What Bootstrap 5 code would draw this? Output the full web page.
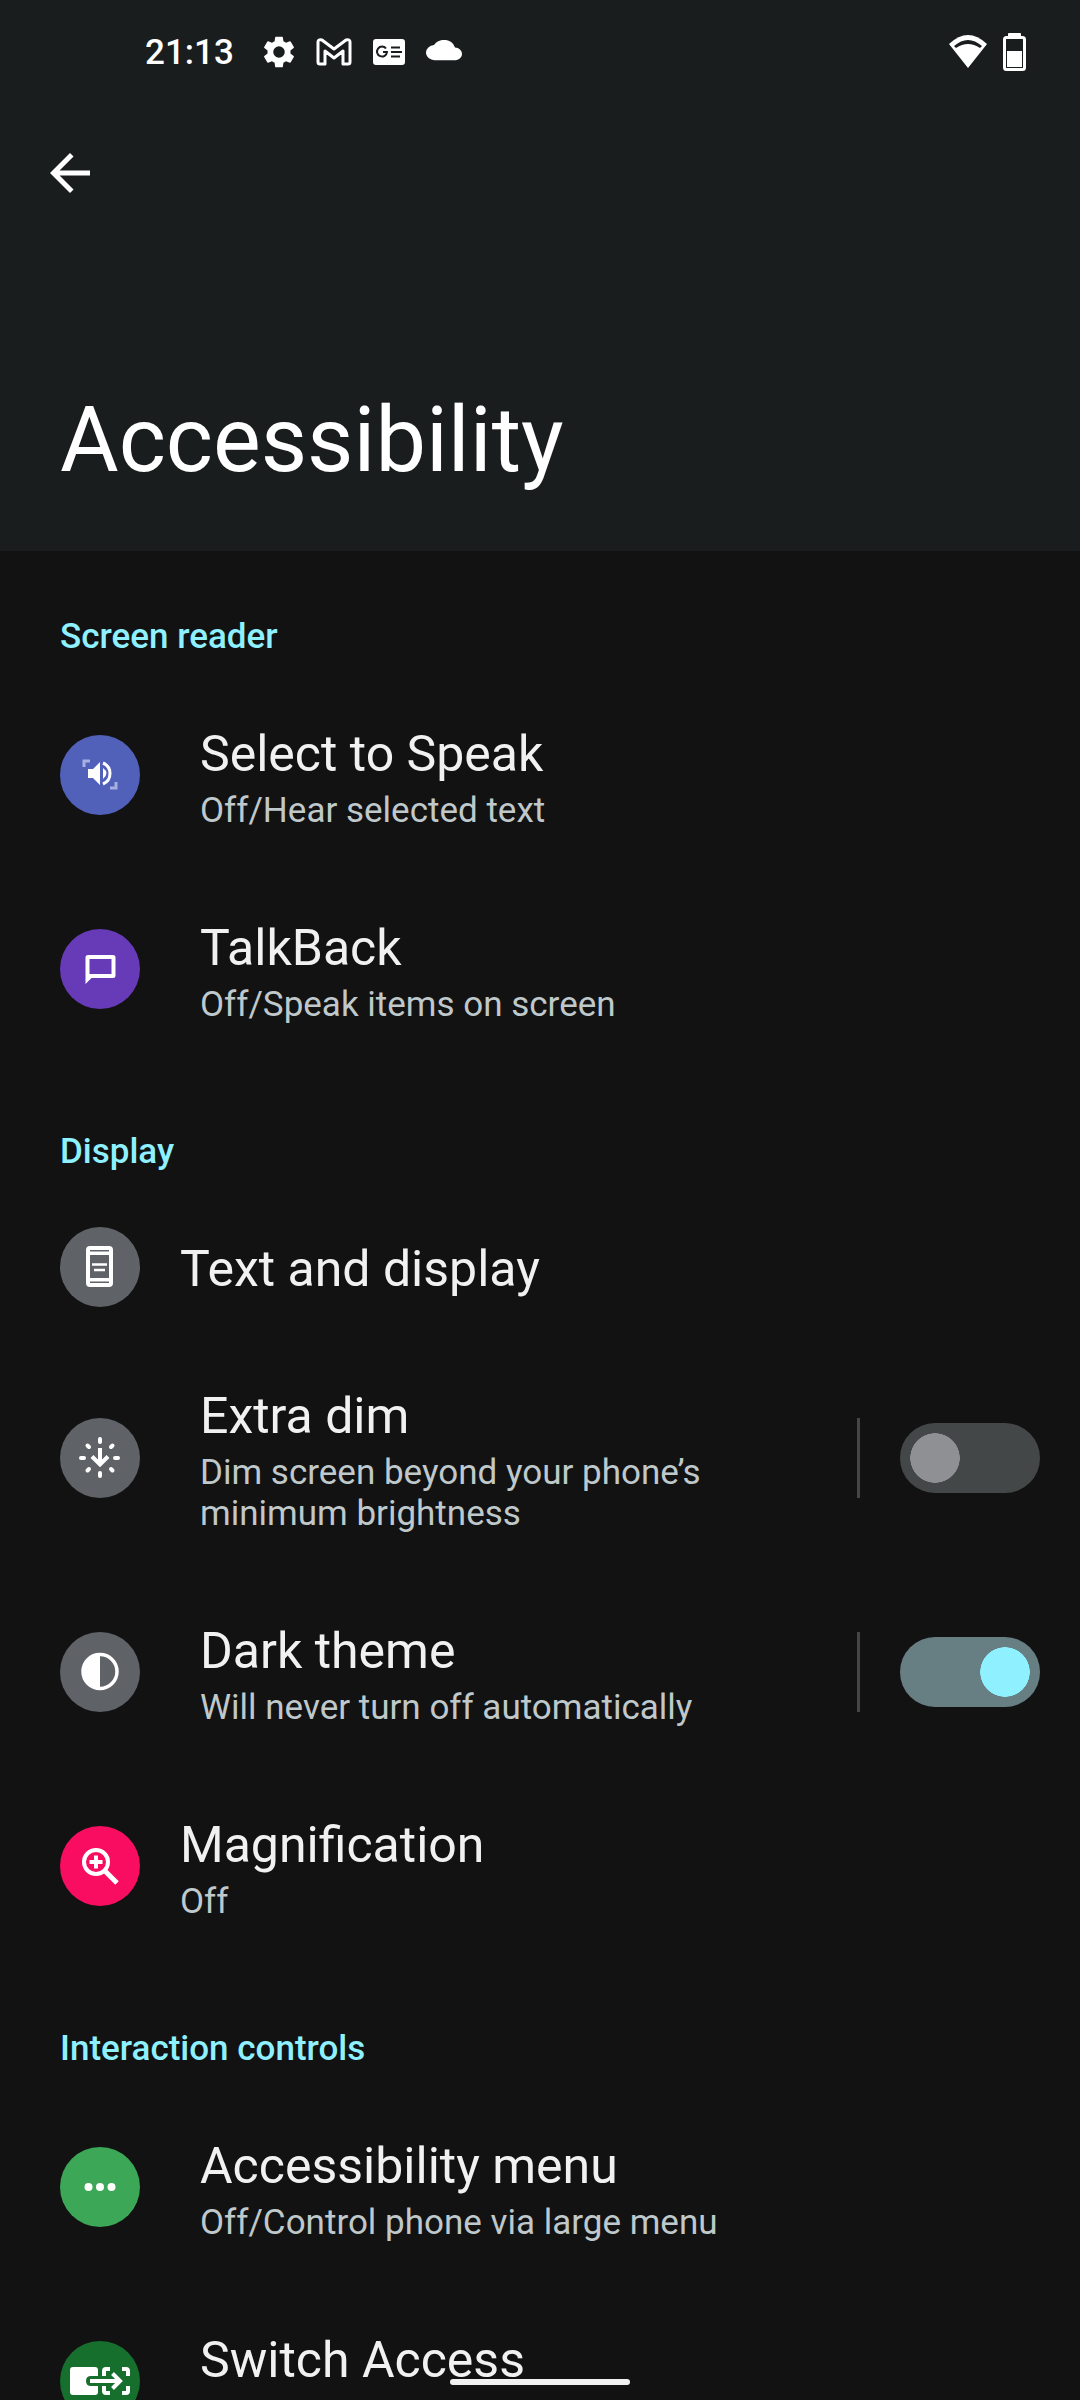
<!DOCTYPE html>
<html lang="en">
<head>
<meta charset="utf-8">
<meta name="viewport" content="width=device-width, initial-scale=1">
<title>Accessibility</title>
<link href="https://cdn.jsdelivr.net/npm/bootstrap@5.3.0/dist/css/bootstrap.min.css" rel="stylesheet">
<style>
  body { font-family: Roboto, "Noto Sans", sans-serif; background: #121212; color: #f1f1f1; }
  .app-head { background: #1a1d1e; color: #fff; padding-bottom: 58px; }
  .status-bar { height: 104px; padding: 0 54px 0 145px; }
  .clock { font-size: 35px; line-height: 41px; font-weight: 500; margin-right: 29px; }
  .status-icons { gap: 21px; }
  .back-btn { width: 60px; height: 60px; margin: 39px 0 185px 40px; color: #fff; }
  .page-title { font-size: 90px; line-height: 105px; font-weight: 400; padding: 0 60px; }
  .settings-list { scrollbar-width: none; }
  .group-title { font-size: 35px; line-height: 41px; font-weight: 500; color: #8ff0ff; padding: 65px 60px 21px; }
  .setting { padding: 0 40px 0 60px; }
  .setting-link { color: inherit; }
  .setting-link:hover { color: inherit; }
  .setting-icon { width: 80px; height: 80px; }
  .setting-text { padding: 46px 0 41px; margin-left: 60px; }
  .setting-text.near { margin-left: 40px; }
  .setting-text.tall { min-height: 194px; }
  .setting-name { font-size: 50px; line-height: 60px; }
  .setting-note { font-size: 35px; line-height: 41px; color: #bfc8ca; margin-top: 6px; }
  .rule { width: 3px; height: 80px; background: #444748; margin: 0 40px 0 60px; }
  .form-switch .toggle { width: 140px; height: 70px; margin: 0; border: 0; border-radius: 35px;
    background: #444748 radial-gradient(circle closest-side, #8e9093 98%, transparent) 10px 10px / 50px 50px no-repeat; }
  .form-switch .toggle:checked { background-color: #677e83;
    background-image: radial-gradient(circle closest-side, #8ff0ff 98%, transparent); background-position: 80px 10px; }
  .gesture-bar { width: 180px; height: 6px; bottom: 15px; background: #f1f1f1; }
</style>
</head>
<body>
<div class="vh-100 d-flex flex-column overflow-hidden">
  <header class="app-head flex-shrink-0">
    <div class="status-bar d-flex align-items-center justify-content-between">
      <div class="d-flex align-items-center">
        <span class="clock">21:13</span>
        <div class="status-icons d-flex align-items-center">
          <svg width="32" height="34" viewBox="2 2 20 20" fill="#fff" aria-hidden="true"><path d="M19.14 12.94c.04-.3.06-.61.06-.94 0-.32-.02-.64-.07-.94l2.03-1.58a.49.49 0 0 0 .12-.61l-1.92-3.32a.49.49 0 0 0-.59-.22l-2.39.96a7 7 0 0 0-1.62-.94l-.36-2.54a.48.48 0 0 0-.48-.41h-3.84a.47.47 0 0 0-.47.41l-.36 2.54c-.59.24-1.13.57-1.62.94l-2.39-.96a.48.48 0 0 0-.59.22L2.74 8.87c-.12.21-.08.47.12.61l2.03 1.58c-.05.3-.09.63-.09.94s.02.64.07.94l-2.03 1.58a.49.49 0 0 0-.12.61l1.92 3.32c.12.22.37.29.59.22l2.39-.96c.5.38 1.03.7 1.62.94l.36 2.54c.05.24.24.41.48.41h3.84c.24 0 .44-.17.47-.41l.36-2.54c.59-.24 1.13-.56 1.62-.94l2.39.96c.22.08.47 0 .59-.22l1.92-3.32a.47.47 0 0 0-.12-.61zM12 15.6a3.6 3.6 0 1 1 0-7.2 3.6 3.6 0 0 1 0 7.2z"/></svg>
          <svg width="36" height="28" viewBox="0 0 36 28" fill="none" stroke="#fff" stroke-width="3" stroke-linejoin="round" aria-hidden="true"><path d="M2 4v20q0 2 2 2h5V13l9 7 9-7v13h5q2 0 2-2V4q0-3-4-2L18 11 6 2Q2 1 2 4z"/></svg>
          <svg width="32" height="28" viewBox="0 0 32 28" aria-hidden="true"><rect y="1" width="32" height="26" rx="3" fill="#fff"/><path d="M13 10.500A5 5 0 1 0 14 14H10M18 9.500h9M18 14h11M18 18.500h9" fill="none" stroke="#1a1d1e" stroke-width="2"/></svg>
          <svg width="36" height="24" viewBox="0 4 24 16" fill="#fff" aria-hidden="true"><path d="M19.350 10.040A7.490 7.490 0 0 0 12 4C9.110 4 6.600 5.640 5.350 8.040A5.990 5.990 0 0 0 0 14c0 3.310 2.690 6 6 6h13c2.760 0 5-2.240 5-5 0-2.640-2.050-4.780-4.650-4.960z" transform="translate(0 .5) scale(1 .85)"/></svg>
        </div>
      </div>
      <div class="d-flex align-items-center gap-3">
        <svg width="38" height="34" viewBox="0 0 38 34" aria-hidden="true"><path d="M0 9Q19-9 38 9L19 33z" fill="#fff"/><path d="M5 11Q19-1 33 11L31 13Q19 5 7 13z" fill="#1a1d1e"/></svg>
        <svg width="23" height="38" viewBox="0 0 23 38" aria-hidden="true"><rect x="5" width="13" height="4" rx="1" fill="#fff"/><rect x="1.500" y="4.500" width="20" height="32" rx="2" fill="none" stroke="#fff" stroke-width="3"/><path d="M4 18h15v16H4z" fill="#fff"/></svg>
      </div>
    </div>
    <button type="button" class="back-btn btn p-0 border-0 d-block" aria-label="Back">
      <svg class="d-block" width="60" height="60" viewBox="0 0 24 24" fill="currentColor" aria-hidden="true"><path d="M20 11H7.830l5.590-5.590L12 4l-8 8 8 8 1.410-1.410L7.830 13H20v-2z"/></svg>
    </button>
    <h1 class="page-title m-0">Accessibility</h1>
  </header>

  <main class="settings-list flex-grow-1 overflow-auto">
    <section>
      <h2 class="group-title m-0">Screen reader</h2>
      <a href="#" class="setting setting-link d-flex align-items-center text-decoration-none">
        <svg class="setting-icon flex-shrink-0" viewBox="0 0 80 80" aria-hidden="true"><circle cx="40" cy="40" r="40" fill="#5160b9"/><path d="M24 32v-6h6M50 53h6v-6" fill="none" stroke="#a8b0e2" stroke-width="3"/><path d="M28 34h5l7-7v23l-7-7h-5zM43 33q7 5 0 11z" fill="#fff"/><path d="M43 28q7 3 7 10.500T43 49" fill="none" stroke="#fff" stroke-width="3"/></svg>
        <div class="setting-text"><div class="setting-name">Select to Speak</div><div class="setting-note">Off/Hear selected text</div></div>
      </a>
      <a href="#" class="setting setting-link d-flex align-items-center text-decoration-none">
        <svg class="setting-icon flex-shrink-0" viewBox="0 0 80 80" aria-hidden="true"><circle cx="40" cy="40" r="40" fill="#673ab7"/><path fill="#fff" fill-rule="evenodd" d="M28 26h25q2.500 0 2.500 2.500v18q0 2.500-2.500 2.500H31.500L25.500 55V28.500Q25.500 26 28 26zM29.500 30v15h22V30z"/></svg>
        <div class="setting-text"><div class="setting-name">TalkBack</div><div class="setting-note">Off/Speak items on screen</div></div>
      </a>
    </section>

    <section>
      <h2 class="group-title m-0">Display</h2>
      <a href="#" class="setting setting-link d-flex align-items-center text-decoration-none">
        <svg class="setting-icon flex-shrink-0" viewBox="0 0 80 80" aria-hidden="true"><circle cx="40" cy="40" r="40" fill="#5f6368"/><rect x="26" y="19" width="27" height="41" rx="4" fill="#fff"/><path d="M30 23h19v1.500H30zM30 28h19v23H30zM30 54.500h19V56H30z" fill="#5f6368"/><path d="M32 37.500h15M34 43h11" stroke="#fff" stroke-width="2.500"/></svg>
        <div class="setting-text near"><div class="setting-name">Text and display</div></div>
      </a>
      <div class="setting d-flex align-items-center">
        <svg class="setting-icon flex-shrink-0" viewBox="0 0 80 80" aria-hidden="true"><circle cx="40" cy="40" r="40" fill="#5f6368"/><g fill="none" stroke="#fff" stroke-width="4"><path stroke-linecap="round" d="M40 21v3M40 55v3M21 40h3M55 40h3M27.500 27.500l1.500 1.500M51 51l1.500 1.500M52.500 27.500L51 29M29 51l-1.500 1.500"/><path d="M40 30v16M32 38.500l8 8 8-8"/></g></svg>
        <label for="extra-dim" class="setting-text flex-grow-1"><span class="setting-name d-block">Extra dim</span><span class="setting-note d-block">Dim screen beyond your phone’s minimum brightness</span></label>
        <div class="rule flex-shrink-0"></div>
        <div class="form-switch p-0 m-0"><input class="toggle form-check-input d-block shadow-none" type="checkbox" role="switch" id="extra-dim"></div>
      </div>
      <div class="setting d-flex align-items-center">
        <svg class="setting-icon flex-shrink-0" viewBox="0 0 80 80" aria-hidden="true"><circle cx="40" cy="40" r="40" fill="#5f6368"/><circle cx="40" cy="39.500" r="17" fill="none" stroke="#fff" stroke-width="3.500"/><path d="M40 22a17 17 0 0 0 0 35z" fill="#fff"/></svg>
        <label for="dark-theme" class="setting-text flex-grow-1"><span class="setting-name d-block">Dark theme</span><span class="setting-note d-block">Will never turn off automatically</span></label>
        <div class="rule flex-shrink-0"></div>
        <div class="form-switch p-0 m-0"><input class="toggle form-check-input d-block shadow-none" type="checkbox" role="switch" id="dark-theme" checked></div>
      </div>
      <a href="#" class="setting setting-link d-flex align-items-center text-decoration-none">
        <svg class="setting-icon flex-shrink-0" viewBox="0 0 80 80" aria-hidden="true"><circle cx="40" cy="40" r="40" fill="#f80d60"/><g fill="none" stroke="#fff" stroke-width="4"><circle cx="36" cy="36" r="12"/><path d="M36 29.500v13M29.500 36h13"/><path d="M44.500 44.500L57 57" stroke-width="5"/></g></svg>
        <div class="setting-text near"><div class="setting-name">Magnification</div><div class="setting-note">Off</div></div>
      </a>
    </section>

    <section>
      <h2 class="group-title m-0">Interaction controls</h2>
      <a href="#" class="setting setting-link d-flex align-items-center text-decoration-none">
        <svg class="setting-icon flex-shrink-0" viewBox="0 0 80 80" aria-hidden="true"><circle cx="40" cy="40" r="40" fill="#3ba757"/><g fill="#fff"><circle cx="28.500" cy="40" r="4"/><circle cx="40" cy="40" r="4"/><circle cx="51.500" cy="40" r="4"/></g></svg>
        <div class="setting-text"><div class="setting-name">Accessibility menu</div><div class="setting-note">Off/Control phone via large menu</div></div>
      </a>
      <a href="#" class="setting setting-link d-flex align-items-center text-decoration-none">
        <svg class="setting-icon flex-shrink-0" viewBox="0 0 80 80" aria-hidden="true"><circle cx="40" cy="40" r="40" fill="#176f2e"/><path d="M13 26h22q3 0 3 3v6h-7q-5 0-5 5t5 5h7v6q0 3-3 3H13q-3 0-3-3V29q0-3 3-3z" fill="#fff"/><g fill="none" stroke="#fff" stroke-width="4"><path d="M30 40h28M52.500 32.500L60 40l-7.500 7.500"/><path d="M44 35v-5q0-2 2-2h4M62 28h4q2 0 2 2v5M68 45v5q0 2-2 2h-4M50 52h-4q-2 0-2-2v-5"/></g></svg>
        <div class="setting-text tall"><div class="setting-name">Switch Access</div></div>
      </a>
    </section>
  </main>
</div>
<div class="gesture-bar position-fixed start-50 translate-middle-x rounded-pill"></div>
<script src="https://cdn.jsdelivr.net/npm/bootstrap@5.3.0/dist/js/bootstrap.bundle.min.js"></script>
</body>
</html>
